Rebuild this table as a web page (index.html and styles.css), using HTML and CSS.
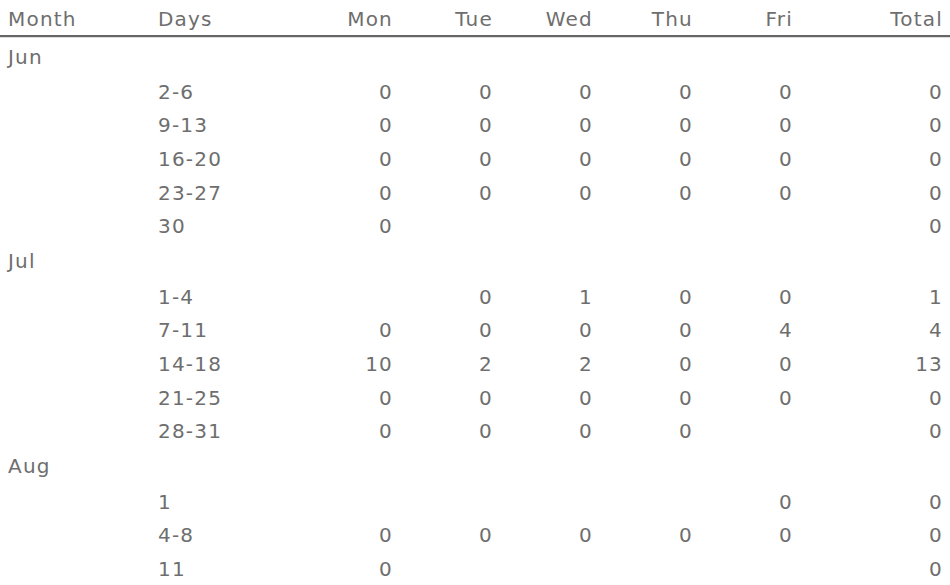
FILE: index.html
```html
<!DOCTYPE html>
<html>
<head>
<meta charset="utf-8">
<link rel="stylesheet" href="styles.css">
</head>
<body>
<div class="report">
  <div class="row head">
    <div>Month</div><div>Days</div><div class="n">Mon</div><div class="n">Tue</div><div class="n">Wed</div><div class="n">Thu</div><div class="n">Fri</div><div class="n">Total</div>
  </div>
  <div class="body">
    <div class="row month"><div>Jun</div><div></div><div></div><div></div><div></div><div></div><div></div><div></div></div>
    <div class="row"><div></div><div>2-6</div><div class="n">0</div><div class="n">0</div><div class="n">0</div><div class="n">0</div><div class="n">0</div><div class="n">0</div></div>
    <div class="row"><div></div><div>9-13</div><div class="n">0</div><div class="n">0</div><div class="n">0</div><div class="n">0</div><div class="n">0</div><div class="n">0</div></div>
    <div class="row"><div></div><div>16-20</div><div class="n">0</div><div class="n">0</div><div class="n">0</div><div class="n">0</div><div class="n">0</div><div class="n">0</div></div>
    <div class="row"><div></div><div>23-27</div><div class="n">0</div><div class="n">0</div><div class="n">0</div><div class="n">0</div><div class="n">0</div><div class="n">0</div></div>
    <div class="row"><div></div><div>30</div><div class="n">0</div><div></div><div></div><div></div><div></div><div class="n">0</div></div>
    <div class="row month"><div>Jul</div><div></div><div></div><div></div><div></div><div></div><div></div><div></div></div>
    <div class="row"><div></div><div>1-4</div><div></div><div class="n">0</div><div class="n">1</div><div class="n">0</div><div class="n">0</div><div class="n">1</div></div>
    <div class="row"><div></div><div>7-11</div><div class="n">0</div><div class="n">0</div><div class="n">0</div><div class="n">0</div><div class="n">4</div><div class="n">4</div></div>
    <div class="row"><div></div><div>14-18</div><div class="n">10</div><div class="n">2</div><div class="n">2</div><div class="n">0</div><div class="n">0</div><div class="n">13</div></div>
    <div class="row"><div></div><div>21-25</div><div class="n">0</div><div class="n">0</div><div class="n">0</div><div class="n">0</div><div class="n">0</div><div class="n">0</div></div>
    <div class="row"><div></div><div>28-31</div><div class="n">0</div><div class="n">0</div><div class="n">0</div><div class="n">0</div><div></div><div class="n">0</div></div>
    <div class="row month"><div>Aug</div><div></div><div></div><div></div><div></div><div></div><div></div><div></div></div>
    <div class="row"><div></div><div>1</div><div></div><div></div><div></div><div></div><div class="n">0</div><div class="n">0</div></div>
    <div class="row"><div></div><div>4-8</div><div class="n">0</div><div class="n">0</div><div class="n">0</div><div class="n">0</div><div class="n">0</div><div class="n">0</div></div>
    <div class="row"><div></div><div>11</div><div class="n">0</div><div></div><div></div><div></div><div></div><div class="n">0</div></div>
  </div>
</div>
</body>
</html>
```
FILE: styles.css
```css
html, body {
  margin: 0;
  padding: 0;
  background: #fff;
}
.report {
  width: 950px;
  font-family: "DejaVu Sans", sans-serif;
  font-size: 20px;
  color: #6e6e6e;
  letter-spacing: 1.2px;
}
.row {
  display: grid;
  grid-template-columns: 150px 150px 100px 100px 100px 100px 100px 150px;
  height: 33.6px;
  align-items: center;
}
.row.month {
  height: 37px;
}
.row > div {
  padding: 0 7px 0 8px;
  white-space: nowrap;
}
.row > .n {
  text-align: right;
}
.head {
  border-bottom: 2px solid #666;
  box-shadow: 0 1px 0 #ddd;
  align-items: end;
  line-height: 1;
  padding-bottom: 6px;
  box-sizing: border-box;
  height: 37px;
}
.body {
  padding-top: 1px;
}
```
